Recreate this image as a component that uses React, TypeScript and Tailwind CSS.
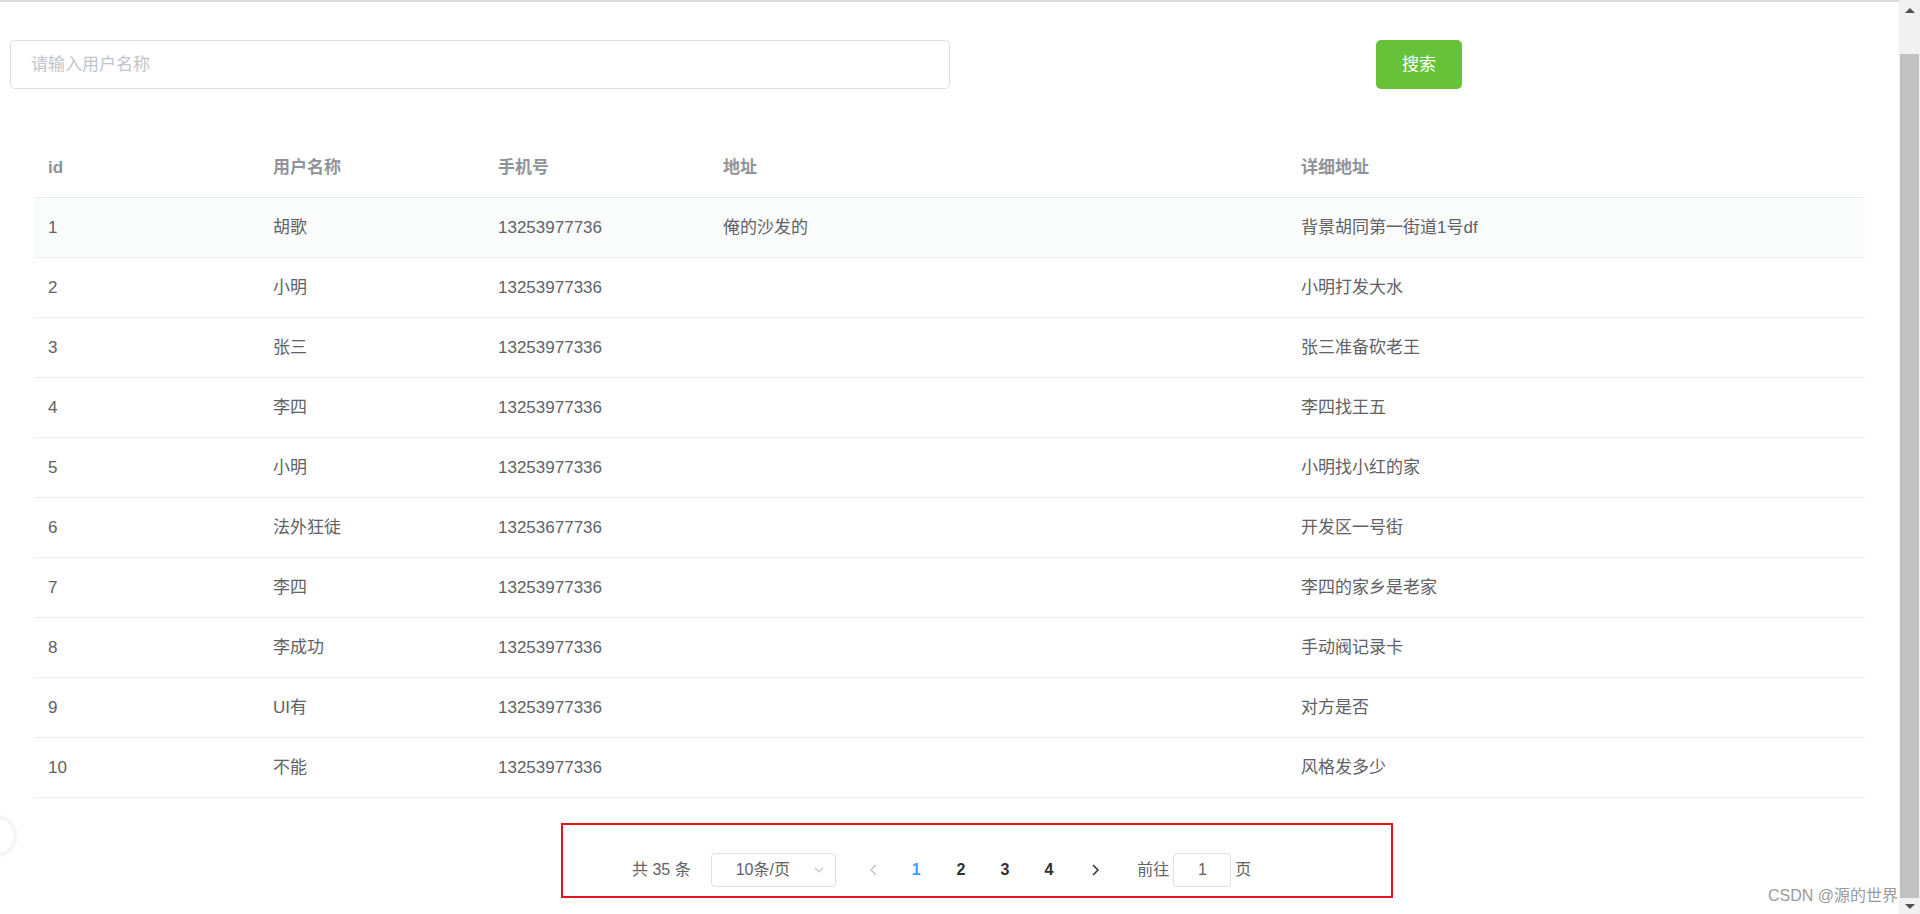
import React from "react";

const rows = [
  ["1", "胡歌", "13253977736", "俺的沙发的", "背景胡同第一街道1号df"],
  ["2", "小明", "13253977336", "", "小明打发大水"],
  ["3", "张三", "13253977336", "", "张三准备砍老王"],
  ["4", "李四", "13253977336", "", "李四找王五"],
  ["5", "小明", "13253977336", "", "小明找小红的家"],
  ["6", "法外狂徒", "13253677736", "", "开发区一号街"],
  ["7", "李四", "13253977336", "", "李四的家乡是老家"],
  ["8", "李成功", "13253977336", "", "手动阀记录卡"],
  ["9", "UI有", "13253977336", "", "对方是否"],
  ["10", "不能", "13253977336", "", "风格发多少"],
];

const cols = "grid grid-cols-[225px_225px_225px_578px_1fr]";

export default function App() {
  return (
    <div
      className="relative flex h-[914px] w-[1920px] overflow-hidden bg-white text-[17px] text-[#606266]"
      style={{ fontFamily: '"Liberation Sans", "Noto Sans CJK SC", sans-serif' }}
    >
      <div className="flex-1 border-t-2 border-[#dcdcdc]">
        {/* search bar */}
        <div className="mt-[38px] flex items-center">
          <div className="ml-[10px] flex h-[49px] w-[940px] items-center rounded-[5px] border border-[#dcdfe6] px-[20px] text-[#c0c4cc]">
            请输入用户名称
          </div>
          <button className="ml-[426px] h-[49px] w-[86px] rounded-[5px] bg-[#67c23a] text-white">搜索</button>
        </div>

        {/* table */}
        <div className="ml-[34px] mt-[49px] w-[1831px]">
          <div className={`${cols} h-[60px] items-center border-b border-[#ebeef5] font-bold text-[#909399]`}>
            <div className="pl-[14px]">id</div>
            <div className="pl-[14px]">用户名称</div>
            <div className="pl-[14px]">手机号</div>
            <div className="pl-[14px]">地址</div>
            <div className="pl-[14px]">详细地址</div>
          </div>
          {rows.map((r, i) => (
            <div
              key={r[0]}
              className={`${cols} h-[60px] items-center border-b border-[#ebeef5] ${i === 0 ? "bg-[#fafcfc]" : ""}`}
            >
              {r.map((c, j) => (
                <div key={j} className="pl-[14px]">{c}</div>
              ))}
            </div>
          ))}
        </div>

        {/* pagination */}
        <div className="ml-[561px] mt-[25px] flex h-[75px] w-[832px] items-end border-2 border-[#e8141c] pb-[9px] text-[16px]">
          <div className="ml-[69px] flex items-center">
            <span>共 35 条</span>
            <div className="ml-[20px] flex h-[34px] w-[125px] items-center justify-between rounded-[4px] border border-[#dcdfe6] pl-[24px] pr-[10px]">
              <span>10条/页</span>
              <svg width="12" height="12" viewBox="0 0 12 12" fill="none" stroke="#c0c4cc" strokeWidth="1.2">
                <path d="M2 4l4 4 4-4" />
              </svg>
            </div>
            <svg className="ml-[32px]" width="12" height="14" viewBox="0 0 12 14" fill="none" stroke="#c0c4cc" strokeWidth="1.5">
              <path d="M8 2L3 7l5 5" />
            </svg>
            <span className="ml-[32px] font-bold text-[#409eff]">1</span>
            <span className="ml-[36px] font-bold text-[#303133]">2</span>
            <span className="ml-[35px] font-bold text-[#303133]">3</span>
            <span className="ml-[35px] font-bold text-[#303133]">4</span>
            <svg className="ml-[36px]" width="12" height="14" viewBox="0 0 12 14" fill="none" stroke="#303133" strokeWidth="1.5">
              <path d="M4 2l5 5-5 5" />
            </svg>
            <span className="ml-[36px]">前往</span>
            <div className="ml-[4px] flex h-[34px] w-[58px] items-center justify-center rounded-[4px] border border-[#dcdfe6]">1</div>
            <span className="ml-[4px]">页</span>
          </div>
        </div>
      </div>

      {/* scrollbar */}
      <div className="flex w-[21px] flex-col bg-[#f1f1f1]">
        <div className="flex h-[20px] items-center justify-center">
          <div className="h-0 w-0 border-x-[5px] border-b-[5px] border-x-transparent border-b-[#505050]" />
        </div>
        <div className="mx-[1px] mt-[34px] flex-1 bg-[#c1c1c1]" />
        <div className="flex h-[16px] items-center justify-center">
          <div className="h-0 w-0 border-x-[5px] border-t-[5px] border-x-transparent border-t-[#505050]" />
        </div>
      </div>

      <div className="absolute left-[-22px] top-[818px] h-[36px] w-[36px] rounded-full bg-white shadow-[0_0_6px_rgba(0,0,0,0.15)]" />
      <div className="absolute left-[1768px] top-[884px] text-[16px] text-[#9a9a9a]">CSDN @源的世界</div>
    </div>
  );
}
